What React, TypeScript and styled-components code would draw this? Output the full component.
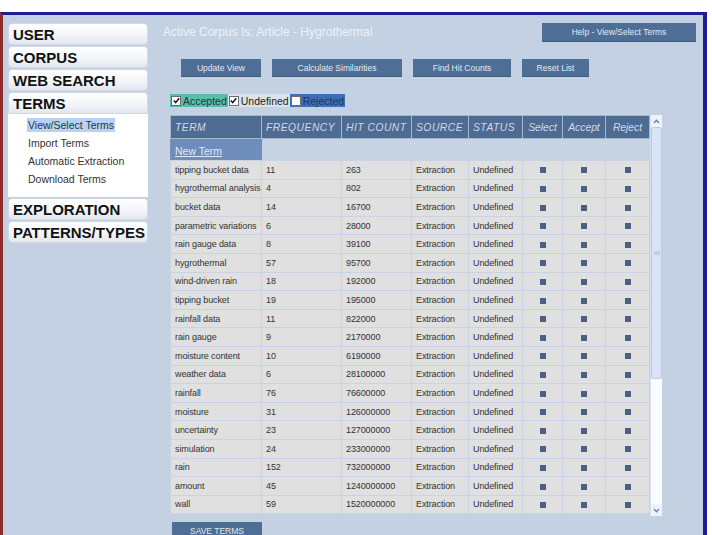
import React from 'react';
import styled, { createGlobalStyle } from 'styled-components';

const GlobalStyle = createGlobalStyle`
  html, body { margin: 0; padding: 0; background: #ffffff; }
  body { font-family: "Liberation Sans", Arial, sans-serif; }
`;

const Page = styled.div`
  width: 712px;
  height: 535px;
  overflow: hidden;
  background: #ffffff;
  padding-top: 12px;
  box-sizing: border-box;
`;

const Frame = styled.div`
  width: 707px;
  height: 523px;
  box-sizing: border-box;
  border-top: 3px solid #1d1d94;
  border-right: 4px solid #1d1d94;
  border-left: 3px solid #8e2b2b;
  background: #c3d1e3;
  display: flex;
  align-items: flex-start;
`;

const Sidebar = styled.nav`
  width: 140px;
  margin: 8px 0 0 5px;
  display: flex;
  flex-direction: column;
`;

const NavItem = styled.div<{ $open?: boolean }>`
  height: 22px;
  box-sizing: border-box;
  padding-left: 4px;
  display: flex;
  align-items: center;
  font: bold 15px "Liberation Sans", Arial, sans-serif;
  color: #121212;
  background: linear-gradient(#ffffff, #f3f5f8 55%, #e2e7ee);
  border: 1px solid #d3d9e2;
  border-radius: ${p => (p.$open ? '4px 4px 0 0' : '4px')};
  margin-bottom: ${p => (p.$open ? 0 : 1)}px;
`;

const SubMenu = styled.div`
  height: 83px;
  background: #ffffff;
  padding: 2px 0 0 19px;
  box-sizing: border-box;
  margin-bottom: 1px;
  display: flex;
  flex-direction: column;
`;

const SubItem = styled.div<{ $active?: boolean }>`
  height: 18px;
  display: flex;
  align-items: center;
  font-size: 10.5px;
  color: #333;
  span {
    padding: 0 1px;
    line-height: 14px;
    background: ${p => (p.$active ? '#b6d2f6' : 'transparent')};
  }
`;

const Main = styled.main`
  flex: 1;
  margin-left: 15px;
  padding: 8px 7px 0 0;
  display: flex;
  flex-direction: column;
  align-items: flex-start;
`;

const TopRow = styled.div`
  align-self: stretch;
  height: 19px;
  display: flex;
  justify-content: space-between;
  align-items: flex-start;
`;

const CorpusTitle = styled.div`
  margin-top: 2px;
  font-size: 12px;
  line-height: 14px;
  color: #eef2f8;
`;

const ActionButton = styled.button<{ $w: number; $h?: number }>`
  width: ${p => p.$w}px;
  height: ${p => p.$h ?? 18}px;
  padding: 0;
  border: none;
  border-bottom: 1px solid #3f5b7e;
  background: #4e6e95;
  color: #e3eaf3;
  font-family: "Liberation Sans", Arial, sans-serif;
  font-size: 8.5px;
  text-align: center;
  flex: none;
`;

const ButtonRow = styled.div`
  margin: 17px 0 0 18px;
  display: flex;
  gap: 11px;
`;

const FilterRow = styled.div`
  margin: 17px 0 0 7px;
  height: 13px;
  display: flex;
`;

const tones = {
  accepted: { bg: '#5bbea4', fg: '#1d3550' },
  undefined: { bg: '#dde2e8', fg: '#222' },
  rejected: { bg: '#3e6fb4', fg: '#1a3868' },
};

const FilterTag = styled.label<{ $tone: keyof typeof tones }>`
  height: 13px;
  display: flex;
  align-items: center;
  gap: 2px;
  padding: 0 1px;
  font-size: 10.5px;
  background: ${p => tones[p.$tone].bg};
  color: ${p => tones[p.$tone].fg};
`;

const Box = styled.span`
  width: 10px;
  height: 10px;
  box-sizing: border-box;
  border: 1px solid #6d6d6d;
  background: #fff;
  display: flex;
  align-items: center;
  justify-content: center;
`;

const TableArea = styled.div`
  margin: 8px 0 0 7px;
  display: flex;
  align-items: flex-start;
`;

const Table = styled.table`
  width: 479px;
  table-layout: fixed;
  border-collapse: collapse;
  border-left: 1px solid #7d91b0;
`;

const HeadCell = styled.th<{ $center?: boolean }>`
  height: 22px;
  padding: 0 0 0 ${p => (p.$center ? 0 : 4)}px;
  background: #4e6b92;
  border: 1px solid #a6b8d0;
  color: #cfdbea;
  font-size: 10.3px;
  font-style: italic;
  font-weight: normal;
  letter-spacing: ${p => (p.$center ? 0 : 0.5)}px;
  text-align: ${p => (p.$center ? 'center' : 'left')};
  white-space: nowrap;
  overflow: hidden;
`;

const NewTermCell = styled.td<{ $link?: boolean }>`
  height: 21px;
  padding: 0 0 0 4px;
  background: ${p => (p.$link ? '#6e8dba' : '#c6d3e3')};
  border: none;
  border-bottom: 1px solid #c9d3e4;
  a {
    color: #e2eaf5;
    font-size: 10.5px;
    text-decoration: underline;
  }
`;

const Cell = styled.td<{ $center?: boolean }>`
  height: 17.6px;
  padding: 0 0 0 ${p => (p.$center ? 0 : 4)}px;
  background: #e0e0e0;
  border: 1px solid #c9d3e4;
  font-size: 9px;
  letter-spacing: -0.1px;
  color: #333;
  white-space: nowrap;
  overflow: hidden;
  text-align: ${p => (p.$center ? 'center' : 'left')};
`;

const Square = styled.span`
  display: inline-block;
  width: 6px;
  height: 6px;
  background: #4b6184;
  vertical-align: middle;
`;

const Scrollbar = styled.div`
  width: 11px;
  height: 401px;
  display: flex;
  flex-direction: column;
  background: #ffffff;
  border-left: 1px solid #d8def0;
`;

const ScrollArrow = styled.div`
  height: 12px;
  display: flex;
  align-items: center;
  justify-content: center;
  background: #eef2fb;
`;

const Thumb = styled.div`
  height: 252px;
  box-sizing: border-box;
  background: #dbe3f8;
  border: 1px solid #bcc8ea;
  border-radius: 2px;
  display: flex;
  align-items: center;
  justify-content: center;
`;

const Track = styled.div`
  flex: 1;
  background: #fbfcff;
`;

const SaveButton = styled(ActionButton)`
  margin: 6px 0 0 9px;
`;

const rows: [string, number, number][] = [
  ['tipping bucket data', 11, 263],
  ['hygrothermal analysis', 4, 802],
  ['bucket data', 14, 16700],
  ['parametric variations', 6, 28000],
  ['rain gauge data', 8, 39100],
  ['hygrothermal', 57, 95700],
  ['wind-driven rain', 18, 192000],
  ['tipping bucket', 19, 195000],
  ['rainfall data', 11, 822000],
  ['rain gauge', 9, 2170000],
  ['moisture content', 10, 6190000],
  ['weather data', 6, 28100000],
  ['rainfall', 76, 76600000],
  ['moisture', 31, 126000000],
  ['uncertainty', 23, 127000000],
  ['simulation', 24, 233000000],
  ['rain', 152, 732000000],
  ['amount', 45, 1240000000],
  ['wall', 59, 1520000000],
];

const Check = () => (
  <svg width="7" height="7" viewBox="0 0 7 7">
    <path d="M0.8 3.6 L2.7 5.6 L6.2 1.2" stroke="#111" strokeWidth="1.5" fill="none" />
  </svg>
);

const Chevron = ({ up }: { up?: boolean }) => (
  <svg width="7" height="5" viewBox="0 0 7 5">
    <path d={up ? 'M1 4 L3.5 1.3 L6 4' : 'M1 1 L3.5 3.7 L6 1'} stroke="#6a7fae" strokeWidth="1.3" fill="none" />
  </svg>
);

export default function App() {
  return (
    <Page>
      <GlobalStyle />
      <Frame>
        <Sidebar>
          <NavItem>USER</NavItem>
          <NavItem>CORPUS</NavItem>
          <NavItem>WEB SEARCH</NavItem>
          <NavItem $open>TERMS</NavItem>
          <SubMenu>
            <SubItem $active><span>View/Select Terms</span></SubItem>
            <SubItem><span>Import Terms</span></SubItem>
            <SubItem><span>Automatic Extraction</span></SubItem>
            <SubItem><span>Download Terms</span></SubItem>
          </SubMenu>
          <NavItem>EXPLORATION</NavItem>
          <NavItem>PATTERNS/TYPES</NavItem>
        </Sidebar>

        <Main>
          <TopRow>
            <CorpusTitle>Active Corpus Is: Article - Hygrothermal</CorpusTitle>
            <ActionButton $w={154} $h={19}>Help - View/Select Terms</ActionButton>
          </TopRow>

          <ButtonRow>
            <ActionButton $w={80}>Update View</ActionButton>
            <ActionButton $w={130}>Calculate Similarities</ActionButton>
            <ActionButton $w={98}>Find Hit Counts</ActionButton>
            <ActionButton $w={67}>Reset List</ActionButton>
          </ButtonRow>

          <FilterRow>
            <FilterTag $tone="accepted"><Box><Check /></Box>Accepted</FilterTag>
            <FilterTag $tone="undefined"><Box><Check /></Box>Undefined</FilterTag>
            <FilterTag $tone="rejected"><Box />Rejected</FilterTag>
          </FilterRow>

          <TableArea>
            <Table>
              <colgroup>
                <col style={{ width: 91 }} />
                <col style={{ width: 80 }} />
                <col style={{ width: 70 }} />
                <col style={{ width: 57 }} />
                <col style={{ width: 54 }} />
                <col style={{ width: 40 }} />
                <col style={{ width: 43 }} />
                <col style={{ width: 44 }} />
              </colgroup>
              <thead>
                <tr>
                  <HeadCell>TERM</HeadCell>
                  <HeadCell>FREQUENCY</HeadCell>
                  <HeadCell>HIT COUNT</HeadCell>
                  <HeadCell>SOURCE</HeadCell>
                  <HeadCell>STATUS</HeadCell>
                  <HeadCell $center>Select</HeadCell>
                  <HeadCell $center>Accept</HeadCell>
                  <HeadCell $center>Reject</HeadCell>
                </tr>
              </thead>
              <tbody>
                <tr>
                  <NewTermCell $link><a>New Term</a></NewTermCell>
                  <NewTermCell colSpan={7} />
                </tr>
                {rows.map(([term, freq, hits]) => (
                  <tr key={term}>
                    <Cell>{term}</Cell>
                    <Cell>{freq}</Cell>
                    <Cell>{hits}</Cell>
                    <Cell>Extraction</Cell>
                    <Cell>Undefined</Cell>
                    <Cell $center><Square /></Cell>
                    <Cell $center><Square /></Cell>
                    <Cell $center><Square /></Cell>
                  </tr>
                ))}
              </tbody>
            </Table>
            <Scrollbar>
              <ScrollArrow><Chevron up /></ScrollArrow>
              <Thumb>
                <svg width="6" height="5" viewBox="0 0 6 5">
                  <path d="M0 1h6M0 3h6" stroke="#a9b6de" strokeWidth="1" />
                </svg>
              </Thumb>
              <Track />
              <ScrollArrow><Chevron /></ScrollArrow>
            </Scrollbar>
          </TableArea>

          <SaveButton $w={90}>SAVE TERMS</SaveButton>
        </Main>
      </Frame>
    </Page>
  );
}
